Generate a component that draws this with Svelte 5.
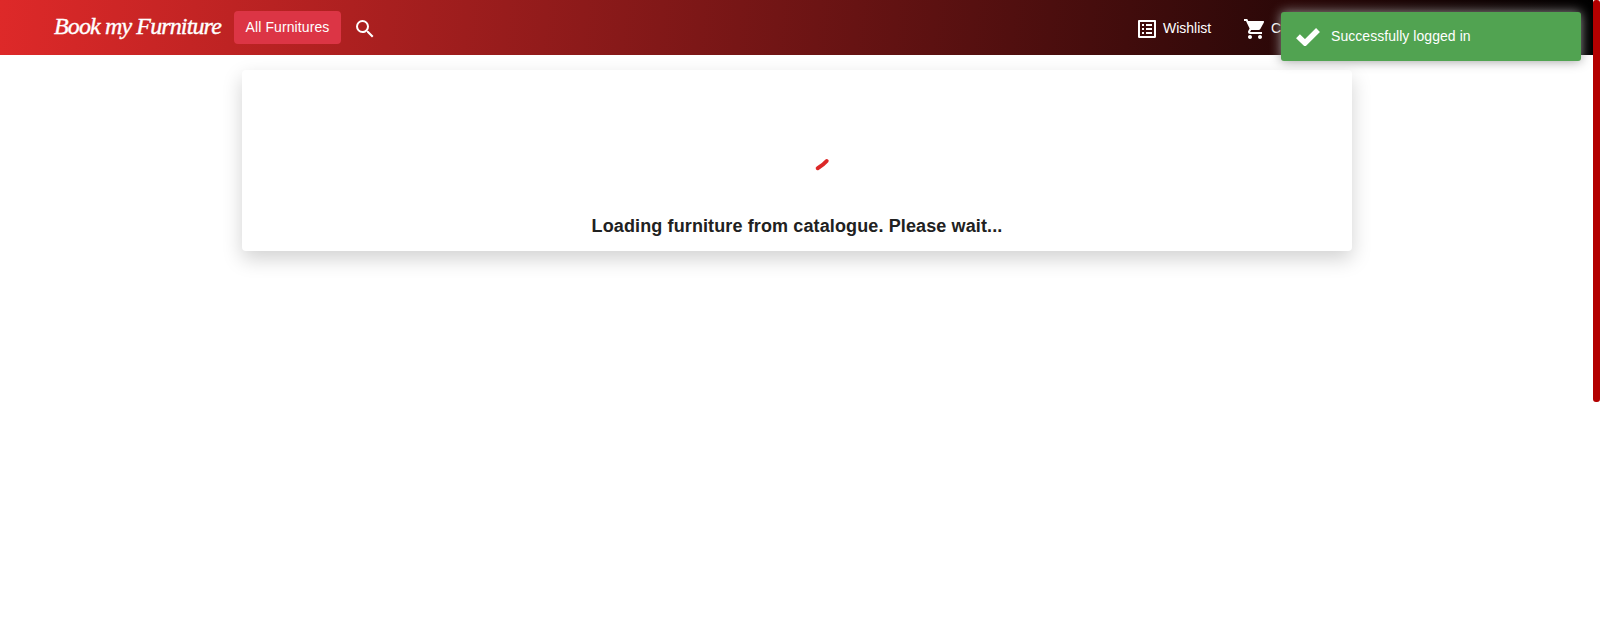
<script>
  const brand = 'Book my Furniture';
</script>

<div class="page">
  <header>
    <span class="brand">{brand}</span>
    <button class="all">All Furnitures</button>
    <svg class="search" width="24" height="24" viewBox="0 0 24 24"><path d="M15.5 14h-.79l-.28-.27A6.471 6.471 0 0 0 16 9.5 6.5 6.5 0 1 0 9.5 16c1.61 0 3.09-.59 4.23-1.57l.27.28v.79l5 4.99L20.49 19l-4.99-5zm-6 0C7.01 14 5 11.99 5 9.5S7.01 5 9.5 5 14 7.01 14 9.5 11.99 14 9.5 14z"/></svg>
    <nav>
      <a class="wish" href="#wishlist"><svg width="24" height="24" viewBox="0 0 24 24"><path d="M19 5v14H5V5h14m1.1-2H3.9c-.5 0-.9.4-.9.9v16.2c0 .4.4.9.9.9h16.2c.4 0 .9-.5.9-.9V3.9c0-.5-.5-.9-.9-.9zM11 7h6v2h-6V7zm0 4h6v2h-6v-2zm0 4h6v2h-6zM7 7h2v2H7zm0 4h2v2H7zm0 4h2v2H7z"/></svg><span>Wishlist</span></a>
      <a class="cart" href="#cart"><svg width="24" height="24" viewBox="0 0 24 24"><path d="M7 18c-1.1 0-1.99.9-1.99 2S5.9 22 7 22s2-.9 2-2-.9-2-2-2zM1 2v2h2l3.6 7.59-1.35 2.45c-.16.28-.25.61-.25.96 0 1.1.9 2 2 2h12v-2H7.42c-.14 0-.25-.11-.25-.25l.03-.12.9-1.63h7.45c.75 0 1.41-.41 1.75-1.03l3.58-6.49A1.003 1.003 0 0 0 20 4H5.21l-.94-2H1zm16 16c-1.1 0-1.99.9-1.99 2s.89 2 1.99 2 2-.9 2-2-.9-2-2-2z"/></svg><span>C</span></a>
    </nav>
  </header>

  <main>
    <section class="card">
      <svg class="spinner" width="60" height="60" viewBox="0 0 60 60"><path d="M35.7 27.2Q41 24.2 44.7 20" /></svg>
      <h3>Loading furniture from catalogue. Please wait...</h3>
    </section>
  </main>

  <div class="toast" role="alert">
    <svg width="24" height="18" viewBox="0 0 24 18"><path d="M2 8.2L9 15L22 2" /></svg>
    <span>Successfully logged in</span>
  </div>
  <div class="scroll"></div>
</div>

<style>
  :global(body) { margin: 0; background: #fff; overflow: hidden; }
  .page { position: relative; height: 634px; overflow: hidden; font-family: "Liberation Sans", Arial, sans-serif; }
  header { box-sizing: border-box; width: 1593px; height: 55px; padding-left: 54px; display: flex; align-items: flex-start; background: linear-gradient(95deg, #de2929, #000); color: #fff; }
  .brand { width: 170px; margin-top: 9px; flex: none; font: italic 24px/34px "Liberation Serif", serif; -webkit-text-stroke: .4px #fff; letter-spacing: -.87px; white-space: nowrap; }
  .all { box-sizing: border-box; width: 107px; height: 33px; margin: 11px 0 0 10px; padding: 0 0 1px; border: 0; border-radius: 4px; background: #dc3545; color: #fff; font: 14px "Liberation Sans", Arial, sans-serif; letter-spacing: .1px; white-space: nowrap; }
  .search { margin: 17px 0 0 12px; }
  svg { display: block; flex: none; fill: #fff; }
  nav { display: flex; margin-left: auto; width: 458px; height: 55px; }
  a { display: flex; align-items: center; gap: 4px; height: 24px; margin-top: 17px; color: #fff; font-size: 14px; letter-spacing: 0; text-decoration: none; }
  a span { position: relative; top: -1px; }
  .wish { width: 108px; }
  main { width: 1593px; padding-top: 15px; }
  .card { box-sizing: border-box; width: 1110px; height: 181px; margin-left: 242px; padding-top: 71px; border-radius: 4px; background: #fff; box-shadow: 0 8px 20px rgba(0,0,0,.18); }
  .spinner { margin: 0 0 0 540px; }
  .spinner path { fill: none; stroke: #dc2828; stroke-width: 4; stroke-linecap: round; }
  h3 { margin: 15px 0 0; font-size: 18px; line-height: 20px; color: #212121; text-align: center; letter-spacing: .12px; }
  .toast { position: absolute; left: 1281px; top: 12px; box-sizing: border-box; width: 300px; height: 49px; padding-left: 15px; display: flex; align-items: center; gap: 11px; border-radius: 3px; background: #51a351; color: #fff; font-size: 14px; letter-spacing: .05px; box-shadow: 0 0 12px #999; }
  .toast span { position: relative; top: -1px; }
  .toast path { fill: none; stroke: #fff; stroke-width: 5.5; }
  .scroll { position: absolute; right: 0; top: 0; width: 7px; height: 402px; border-radius: 3px; background: #b30000; }
</style>
